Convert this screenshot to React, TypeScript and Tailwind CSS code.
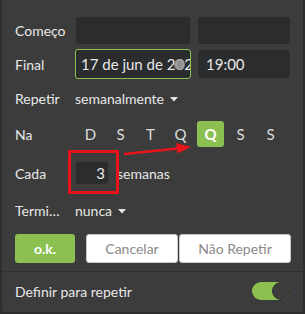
import React from "react";

const font = { fontFamily: "Lato, 'Noto Sans', sans-serif" };

function Caret() {
  return (
    <svg width="8" height="5" viewBox="0 0 8 5" className="ml-[6px] mt-[2px]">
      <path d="M0 0 L8 0 L4 4.5 Z" fill="#e6e6e6" />
    </svg>
  );
}

export default function App() {
  const days = ["D", "S", "T", "Q", "Q", "S", "S"];
  return (
    <div className="w-[305px] h-[314px] bg-[#2d2e2d] relative" style={font}>
      <div className="ml-[2px] w-[301px] h-[312px] bg-[#3b3c3b] rounded-b-[3px] flex flex-col text-[14px] text-[#e8e8e8]">
        {/* Começo */}
        <div className="mt-[17px] h-[27px] flex items-center">
          <div className="w-[61px] pl-[13px] shrink-0">Começo</div>
          <div className="ml-[13px] w-[114px] h-[27px] rounded-[3px] bg-[#2b2c2e]" />
          <div className="ml-[8px] w-[92px] h-[27px] rounded-[3px] bg-[#2b2c2e]" />
        </div>
        {/* Final */}
        <div className="mt-[5px] h-[30px] flex items-center">
          <div className="w-[61px] pl-[13px] shrink-0">Final</div>
          <div className="ml-[12px] w-[116px] h-[30px] rounded-[3px] bg-[#2b2c2e] border border-[#8cc152] relative overflow-hidden flex items-center pl-[5px] whitespace-nowrap text-[15px]">
            <span>17 de jun de 2025</span>
            <div className="absolute left-[98px] top-[9px] w-[11px] h-[11px] rounded-full bg-[#9a9a9a] opacity-90" />
          </div>
          <div className="ml-[7px] w-[92px] h-[28px] rounded-[3px] bg-[#2b2c2e] flex items-center pl-[8px] text-[15px]">19:00</div>
        </div>
        {/* Repetir */}
        <div className="mt-[7px] h-[24px] flex items-center">
          <div className="w-[61px] pl-[13px] shrink-0">Repetir</div>
          <div className="ml-[12px] flex items-center">
            <span>semanalmente</span>
            <Caret />
          </div>
        </div>
        {/* Na */}
        <div className="mt-[11px] h-[26px] flex items-center">
          <div className="w-[61px] pl-[13px] shrink-0">Na</div>
          <div className="ml-[14px] flex gap-[3px] text-[15px]">
            {days.map((d, i) => (
              <div
                key={i}
                className={
                  i === 4
                    ? "w-[27px] h-[26px] rounded-[3px] bg-[#8cc152] text-white font-bold flex items-center justify-center"
                    : "w-[27px] h-[26px] flex items-center justify-center text-[#dcdcdc]"
                }
              >
                {d}
              </div>
            ))}
          </div>
        </div>
        {/* Cada */}
        <div className="mt-[15px] h-[22px] flex items-center">
          <div className="w-[61px] pl-[13px] shrink-0">Cada</div>
          <div className="ml-[13px] w-[32px] h-[22px] rounded-[3px] bg-[#2b2c2e] flex items-center justify-end pr-[3px] text-[15px]">3</div>
          <span className="ml-[9px]">semanas</span>
        </div>
        {/* Termina */}
        <div className="mt-[15px] h-[22px] flex items-center">
          <div className="w-[61px] pl-[13px] shrink-0 overflow-hidden whitespace-nowrap text-ellipsis">Termina</div>
          <div className="ml-[12px] flex items-center">
            <span>nunca</span>
            <Caret />
          </div>
        </div>
        {/* Buttons */}
        <div className="mt-[13px] h-[29px] flex items-center pl-[13px]">
          <div className="w-[60px] h-[29px] rounded-[3px] bg-[#8cc152] text-white font-bold flex items-center justify-center">o.k.</div>
          <div className="ml-[11px] w-[92px] h-[29px] rounded-[3px] bg-white border border-[#c8c8c8] text-[#8a8a8a] flex items-center justify-center">Cancelar</div>
          <div className="ml-[1px] w-[112px] h-[29px] rounded-[3px] bg-white border border-[#c8c8c8] text-[#8a8a8a] flex items-center justify-center">Não Repetir</div>
        </div>
        {/* Divider */}
        <div className="mt-[8px] h-px bg-[#2e2f2e]" />
        {/* Definir */}
        <div className="mt-[10px] h-[18px] flex items-center pl-[13px] pr-[13px] justify-between">
          <span>Definir para repetir</span>
          <div className="w-[38px] h-[18px] rounded-full bg-[#8cc152] relative">
            <div className="absolute right-0 top-0 w-[18px] h-[18px] rounded-full bg-[#3b3c3b] border border-[#2e2f2e]" />
          </div>
        </div>
      </div>
      {/* Red highlight rectangle */}
      <div className="absolute left-[68px] top-[150px] w-[51px] h-[44px] border-[3px] border-[#e8141b]" />
      {/* Red arrow */}
      <svg className="absolute left-0 top-0" width="305" height="314" viewBox="0 0 305 314">
        <line x1="124" y1="154" x2="178" y2="148.5" stroke="#e8141b" strokeWidth="2.5" />
        <path d="M191 147 L176 143 L177.5 153.5 Z" fill="#e8141b" />
      </svg>
    </div>
  );
}
